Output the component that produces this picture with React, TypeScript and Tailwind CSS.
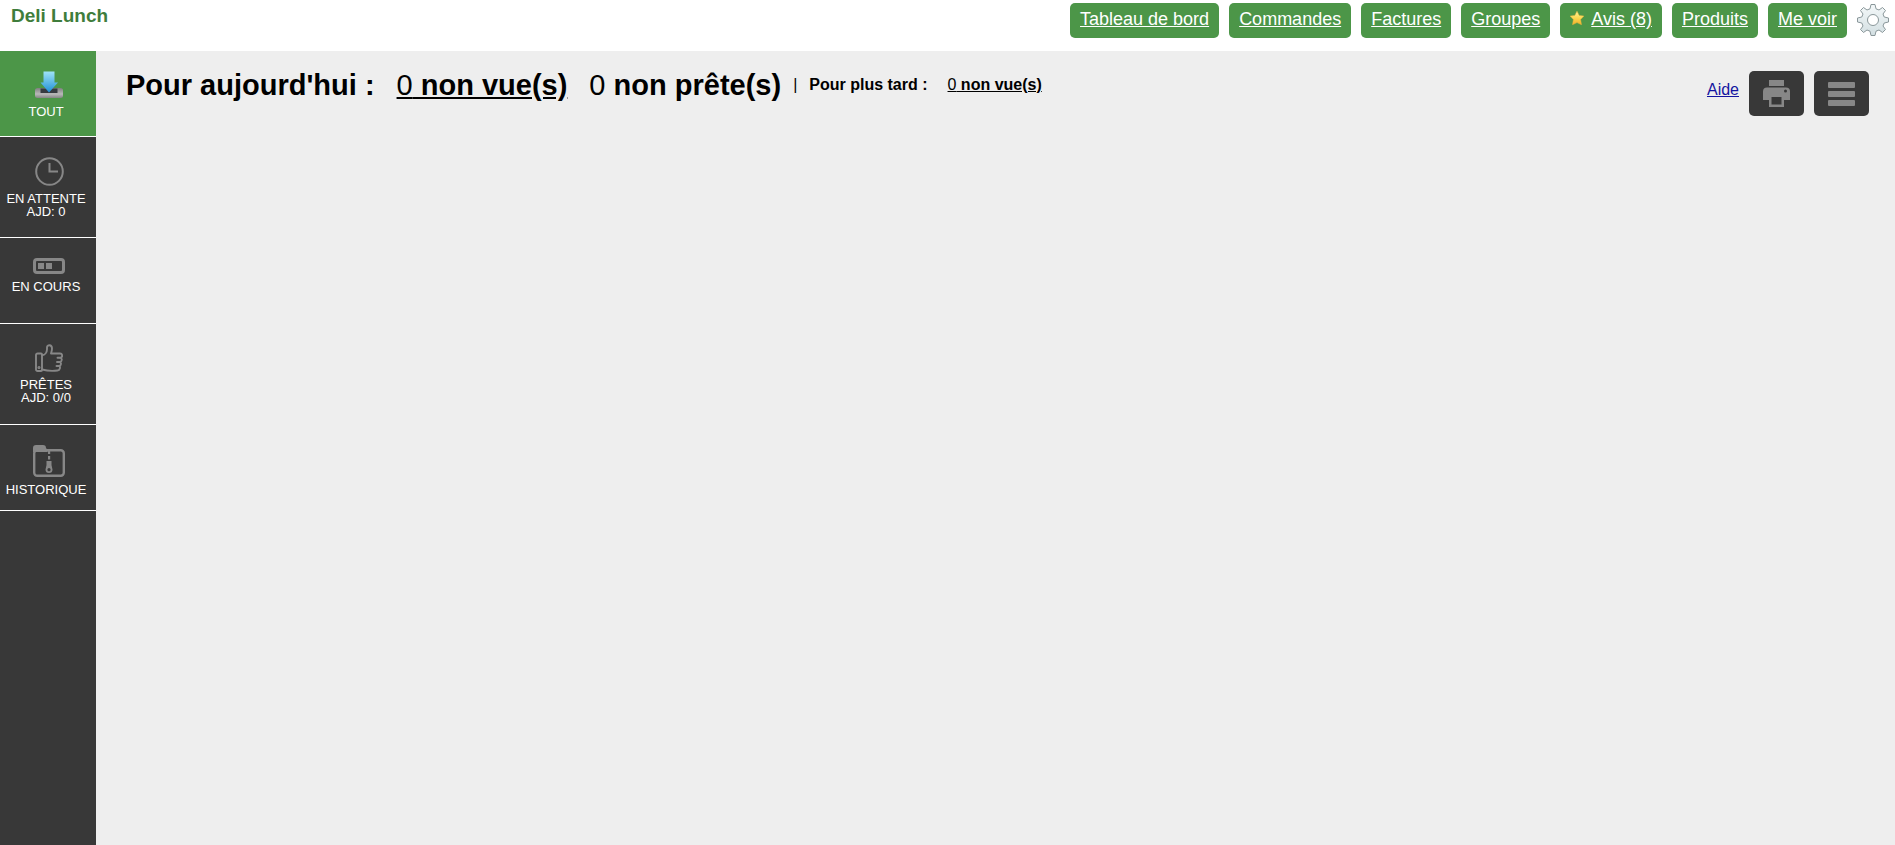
const navLinks = [
  { label: "Tableau de bord", href: "#dashboard" },
  { label: "Commandes", href: "#commandes" },
  { label: "Factures", href: "#factures" },
  { label: "Groupes", href: "#groupes" },
  { label: "Avis (8)", href: "#avis", star: true },
  { label: "Produits", href: "#produits" },
  { label: "Me voir", href: "#voir" },
];

function StarIcon() {
  return (
    <svg width="14" height="14" viewBox="0 0 14 14" aria-hidden="true">
      <defs>
        <linearGradient id="star" x1="0" y1="0" x2="0" y2="1">
          <stop offset="0" stopColor="#fff3a0" />
          <stop offset=".5" stopColor="#fbd850" />
          <stop offset="1" stopColor="#f2b02a" />
        </linearGradient>
      </defs>
      <path
        d="M7 .2l2.200 4.200 4.700.7-3.300 3.500.9 5.100L7 11.600l-4.500 2.100.9-5.100L.1 5.100l4.700-.7z"
        fill="url(#star)"
        stroke="#e9b53a"
        strokeWidth=".5"
        strokeLinejoin="round"
      />
    </svg>
  );
}

function GearIcon() {
  return (
    <svg width="32" height="32" viewBox="0 0 32 32" aria-hidden="true">
      <defs>
        <linearGradient id="gear" x1="0" y1="0" x2="0" y2="1">
          <stop offset="0" stopColor="#f4f8f9" />
          <stop offset="1" stopColor="#d3dfe2" />
        </linearGradient>
      </defs>
      <path
        d="M14 .5h4l1 4.300 3 1.200 3.500-2.500 3 3-2.500 3.500 1.200 3 4.300 1v4l-4.300 1-1.200 3 2.500 3.500-3 3-3.500-2.500-3 1.200-1 4.300h-4l-1-4.300-3-1.200-3.500 2.500-3-3L6 22l-1.200-3-4.300-1v-4l4.300-1L6 10 3.500 6.500l3-3L10 6l3-1.200z"
        fill="url(#gear)"
        stroke="#8a979a"
        strokeLinejoin="round"
      />
      <circle cx="16" cy="16" r="5.500" fill="#fff" stroke="#8a979a" />
    </svg>
  );
}

function DownloadIcon() {
  return (
    <svg width="28" height="28" viewBox="0 0 28 28" aria-hidden="true">
      <defs>
        <linearGradient id="arrow" x1="0" y1="0" x2="0" y2="1">
          <stop offset="0" stopColor="#9fe3f7" />
          <stop offset="1" stopColor="#1f8fd6" />
        </linearGradient>
        <linearGradient id="tray" x1="0" y1="0" x2="0" y2="1">
          <stop offset="0" stopColor="#7f7f7f" />
          <stop offset=".6" stopColor="#b9b9b9" />
          <stop offset="1" stopColor="#858585" />
        </linearGradient>
      </defs>
      <rect x="0" y="17" width="28" height="10" rx="2.500" fill="url(#tray)" />
      <path d="M5.500 17.500h17v4.500h-17z" fill="#363b40" />
      <path d="M8.500.5h11v11H23L14 21.500 5.500 11.500h3z" fill="url(#arrow)" />
    </svg>
  );
}

function ClockIcon() {
  return (
    <svg width="29" height="29" viewBox="0 0 29 29" fill="none" stroke="#878787" strokeWidth="2" aria-hidden="true">
      <circle cx="14.500" cy="14.500" r="13.300" />
      <path d="M14.500 6v8.500H23" />
    </svg>
  );
}

function ProgressIcon() {
  return (
    <svg width="32" height="16" viewBox="0 0 32 16" aria-hidden="true">
      <rect x="1.500" y="1.500" width="29" height="13" rx="2.500" fill="none" stroke="#878787" strokeWidth="3" />
      <path d="M5 5h6v6H5zM13 5h6v6h-6z" fill="#878787" />
    </svg>
  );
}

function ThumbIcon() {
  return (
    <svg width="28" height="28" viewBox="0 0 28 28" fill="none" stroke="#878787" strokeWidth="1.900" strokeLinejoin="round" strokeLinecap="round" aria-hidden="true">
      <path d="M2.500 9.500H6a1 1 0 0 1 1 1V26a1 1 0 0 1-1 1H2.500A1.500 1.500 0 0 1 1 25.500V11a1.500 1.500 0 0 1 1.500-1.500z" />
      <path d="M7 11.200c3-.2 5-3 5-6V3.500C12 .5 17 .2 17 4.500c0 2-.6 3.500-1 5h9c2.800 0 2.800 4 .4 4.300 2 .5 1.800 4-.6 4.200 1.800.6 1.400 3.800-.6 4 1.500.9.800 4.300-1.700 4.500-5 .7-10 .5-15.500-1" />
      <path d="M22.500 13.800h2.500M22 18h2.500M21.500 22h2.500" />
      <circle cx="4" cy="23.500" r=".6" />
    </svg>
  );
}

function ArchiveIcon() {
  return (
    <svg width="32" height="32" viewBox="0 0 32 32" aria-hidden="true">
      <path d="M0 7V3a3 3 0 0 1 3-3h7a3 3 0 0 1 3 3l1.500 2v2z" fill="#878787" />
      <rect x="1.200" y="5.200" width="29.600" height="25.600" rx="3" fill="none" stroke="#878787" strokeWidth="2.400" />
      <path d="M15 6h2.200v3H15zM15 11h2.200v3.500H15z" fill="#878787" />
      <path d="M13.500 16h5v4l1 4.500a3.500 3.500 0 1 1-7 0l1-4.500z" fill="#878787" />
      <circle cx="16" cy="24.700" r="1.600" fill="#383838" />
    </svg>
  );
}

function PrinterIcon() {
  return (
    <svg width="27" height="27" viewBox="0 0 27 27" fill="#878787" aria-hidden="true">
      <path d="M6 0h15v6H6z" />
      <path
        fillRule="evenodd"
        d="M4 7.500h19a4 4 0 0 1 4 4V20h-6v7H6v-7H0v-8.500a4 4 0 0 1 4-4zM8.500 17v7.500h10V17zM22.500 9.500a1.500 1.500 0 1 0 0 3 1.500 1.500 0 0 0 0-3z"
      />
    </svg>
  );
}

function MenuIcon() {
  return (
    <svg width="27" height="24" viewBox="0 0 27 24" fill="#878787" aria-hidden="true">
      <rect width="27" height="6" rx="1" />
      <rect y="9" width="27" height="6" rx="1" />
      <rect y="18" width="27" height="6" rx="1" />
    </svg>
  );
}

const tabs = [
  { lines: ["TOUT"], href: "#tout", icon: <DownloadIcon />, box: "min-h-[86px] bg-[#4c9648]" },
  { lines: ["EN ATTENTE", "AJD: 0"], href: "#attente", icon: <ClockIcon />, box: "min-h-[101px]" },
  { lines: ["EN COURS"], href: "#cours", icon: <ProgressIcon />, box: "min-h-[86px]" },
  { lines: ["PRÊTES", "AJD: 0/0"], href: "#pretes", icon: <ThumbIcon />, box: "min-h-[101px]" },
  { lines: ["HISTORIQUE"], href: "#historique", icon: <ArchiveIcon />, box: "min-h-[86px]" },
];

export default function App() {
  return (
    <div className="flex min-h-screen flex-col bg-[#eeeeee] font-['Liberation_Sans',Arial,sans-serif] text-base text-black">
      <header className="flex min-h-[51px] items-start justify-between bg-white pt-[3px] pr-1.5 pl-[11px]">
        <h1 className="text-[19px] leading-[26px] font-bold text-[#3f7d3c]">Deli Lunch</h1>
        <nav className="flex items-start gap-2.5">
          {navLinks.map((link) => (
            <a
              key={link.label}
              href={link.href}
              className="flex h-[35px] gap-[7px] rounded-[5px] bg-[#4c9648] px-2.5 pt-1.5 text-lg leading-5 whitespace-nowrap text-white"
            >
              {link.star && (
                <span className="pt-0.5">
                  <StarIcon />
                </span>
              )}
              <span className="underline">{link.label}</span>
            </a>
          ))}
          <button type="button" aria-label="Paramètres" className="cursor-pointer pt-px">
            <GearIcon />
          </button>
        </nav>
      </header>

      <div className="flex flex-1">
        <aside className="w-24 shrink-0 bg-[#383838]">
          {tabs.map((tab) => (
            <a
              key={tab.href}
              href={tab.href}
              className={`flex flex-col items-center gap-1.5 border-b border-white pt-5 pl-0.5 text-white ${tab.box}`}
            >
              {tab.icon}
              <span className="pr-1.5 text-center text-[13px] leading-[13px] whitespace-nowrap">
                {tab.lines.map((line) => (
                  <span key={line} className="block">
                    {line}
                  </span>
                ))}
              </span>
            </a>
          ))}
        </aside>

        <main className="flex flex-1 items-start justify-between pt-[18px] pr-[26px] pl-[30px]">
          <div className="flex items-center whitespace-nowrap">
            <h2 className="text-[29px] leading-8 font-bold">Pour aujourd'hui :</h2>
            <a href="#non-vues" className="ml-[22px] text-[29px] leading-8 font-bold underline">
              <span className="font-normal">0</span> non vue(s)
            </a>
            <p className="ml-[22px] text-[29px] leading-8 font-bold">
              <span className="font-normal">0</span> non prête(s)
            </p>
            <span className="mx-3">|</span>
            <p className="font-bold">Pour plus tard :</p>
            <a href="#plus-tard" className="ml-5 font-bold underline">
              <span className="font-normal">0</span> non vue(s)
            </a>
          </div>
          <div className="flex items-start gap-2.5 pt-0.5">
            <a href="#aide" className="pt-[7px] text-[#1414a0] underline">
              Aide
            </a>
            <button
              type="button"
              aria-label="Imprimer"
              className="flex h-[45px] w-[55px] cursor-pointer items-center justify-center rounded-[5px] bg-[#383838]"
            >
              <PrinterIcon />
            </button>
            <button
              type="button"
              aria-label="Menu"
              className="flex h-[45px] w-[55px] cursor-pointer items-center justify-center rounded-[5px] bg-[#383838]"
            >
              <MenuIcon />
            </button>
          </div>
        </main>
      </div>
    </div>
  );
}
